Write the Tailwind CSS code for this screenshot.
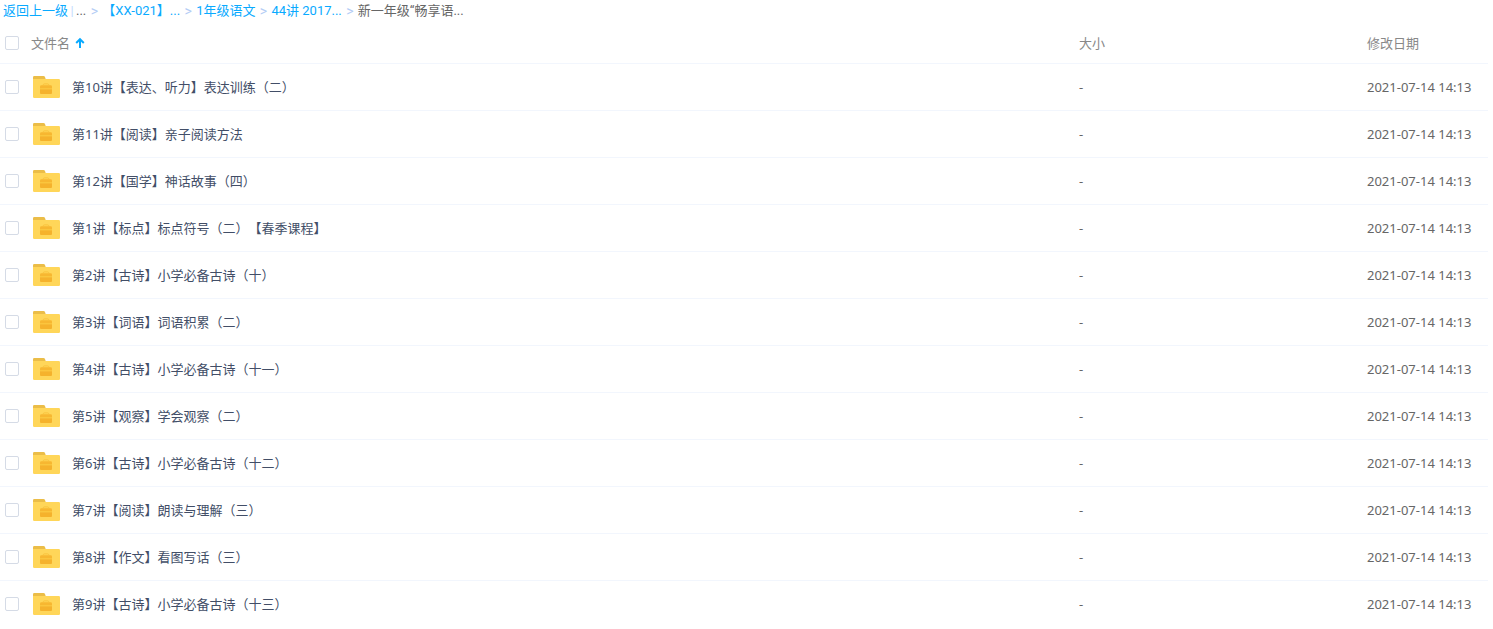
<!DOCTYPE html>
<html lang="zh-CN">
<head>
  <meta charset="UTF-8" />
  <meta name="viewport" content="width=device-width, initial-scale=1.0"/>
  <title>文件列表</title>
  <script src="https://cdn.jsdelivr.net/npm/@tailwindcss/browser@4"></script>
</head>
<body class="bg-white font-['Noto_Sans','Noto_Sans_CJK_SC',sans-serif] text-[13px] leading-5 text-[#424e67] [text-spacing-trim:space-all]">
  <div class="pr-[5px]">

    <!-- Ruta de carpetas -->
    <nav class="flex items-center h-[22px] pl-[3px] whitespace-pre font-['Roboto','Noto_Sans_CJK_SC',sans-serif] text-[#09aaff]">
      <a href="#" class="hover:underline">返回上一级</a>
      <span class="w-2 text-center text-[#c4dbfe]">|</span>
      <span class="text-[#666666]">...</span>
      <span class="w-4 text-center text-sm text-[#b4cdf5]">&gt;</span>
      <a href="#" class="hover:underline">【XX-021】...</a>
      <span class="w-4 text-center text-sm text-[#b4cdf5]">&gt;</span>
      <a href="#" class="hover:underline">1年级语文</a>
      <span class="w-4 text-center text-sm text-[#b4cdf5]">&gt;</span>
      <a href="#" class="hover:underline">44讲 2017...</a>
      <span class="w-4 text-center text-sm text-[#b4cdf5]">&gt;</span>
      <span class="text-[#666666]">新一年级“畅享语...</span>
    </nav>

    <!-- Tabla de archivos -->
    <table class="w-full table-fixed border-collapse">
      <thead>
        <tr class="h-[41px] border-b border-[#f2f6fd] text-left text-[#888888]">
          <th class="p-0 pt-0.5 font-normal">
            <div class="flex items-center pl-[5px]">
              <input type="checkbox" id="todos" aria-label="全选" class="appearance-none size-[14px] border border-[#d5dbe6] rounded-xs bg-white checked:bg-[#09aaff]"/>
              <button class="flex items-center gap-1 ml-3">
                文件名
                <svg class="w-3 h-3" viewBox="0 0 12 12" fill="none" stroke="#09aaff" stroke-width="2">
                  <path d="M6 11V2.5M2.2 6L6 2.2L9.8 6"/>
                </svg>
              </button>
            </div>
          </th>
          <th class="w-[288px] p-0 pt-0.5 font-normal">大小</th>
          <th class="w-[121px] p-0 pt-0.5 font-normal">修改日期</th>
        </tr>
      </thead>
      <tbody id="lista"></tbody>
    </table>

  </div>

  <script>
    const carpetas = [
      "第10讲【表达、听力】表达训练（二）",
      "第11讲【阅读】亲子阅读方法",
      "第12讲【国学】神话故事（四）",
      "第1讲【标点】标点符号（二）【春季课程】",
      "第2讲【古诗】小学必备古诗（十）",
      "第3讲【词语】词语积累（二）",
      "第4讲【古诗】小学必备古诗（十一）",
      "第5讲【观察】学会观察（二）",
      "第6讲【古诗】小学必备古诗（十二）",
      "第7讲【阅读】朗读与理解（三）",
      "第8讲【作文】看图写话（三）",
      "第9讲【古诗】小学必备古诗（十三）"
    ];

    document.getElementById("lista").innerHTML = carpetas.map((nombre, i) => `
      <tr class="h-[47px] border-b border-[#f2f6fd] last:border-b-0 hover:bg-[#f4fbff]">
        <td class="p-0">
          <div class="flex items-center pl-[5px]">
            <input type="checkbox" id="c${i}" aria-label="${nombre}" class="appearance-none size-[14px] border border-[#d5dbe6] rounded-xs bg-white checked:bg-[#09aaff]"/>
            <svg class="w-[27px] h-[22px] ml-[14px] mr-3" viewBox="0 0 27 22">
              <path d="M0 1.2Q0 0 1.2 0H10.5Q11.6 0 12 1L13 4H0Z" fill="#ebbd48"/>
              <path d="M0 3H25.8Q27 3 27 4.2V20.8Q27 22 25.8 22H1.2Q0 22 0 20.8Z" fill="#ffd659"/>
              <path d="M9.8 9.4Q10.2 7.9 11.5 7.9H14.5Q15.8 7.9 16.2 9.4" fill="none" stroke="#f9c23c" stroke-width="1"/>
              <path d="M7 12.4V10.5Q7 9.2 8.3 9.2H17.7Q19 9.2 19 10.5V12.4Z" fill="#f7b731"/>
              <path d="M7 12.4H19V13.2H7Z" fill="#fbc53a"/>
              <path d="M7 13.2H19V17Q19 18 18 18H8Q7 18 7 17Z" fill="#f5b22c"/>
            </svg>
            <a href="#" class="hover:text-[#09aaff]">${nombre}</a>
          </div>
        </td>
        <td class="p-0 text-[#666666]">-</td>
        <td class="p-0 text-[#666666] whitespace-nowrap">2021-07-14 14:13</td>
      </tr>`).join("");

    document.getElementById("todos").addEventListener("change", function (e) {
      document.querySelectorAll("#lista input").forEach(c => c.checked = e.target.checked);
    });
  </script>
</body>
</html>
